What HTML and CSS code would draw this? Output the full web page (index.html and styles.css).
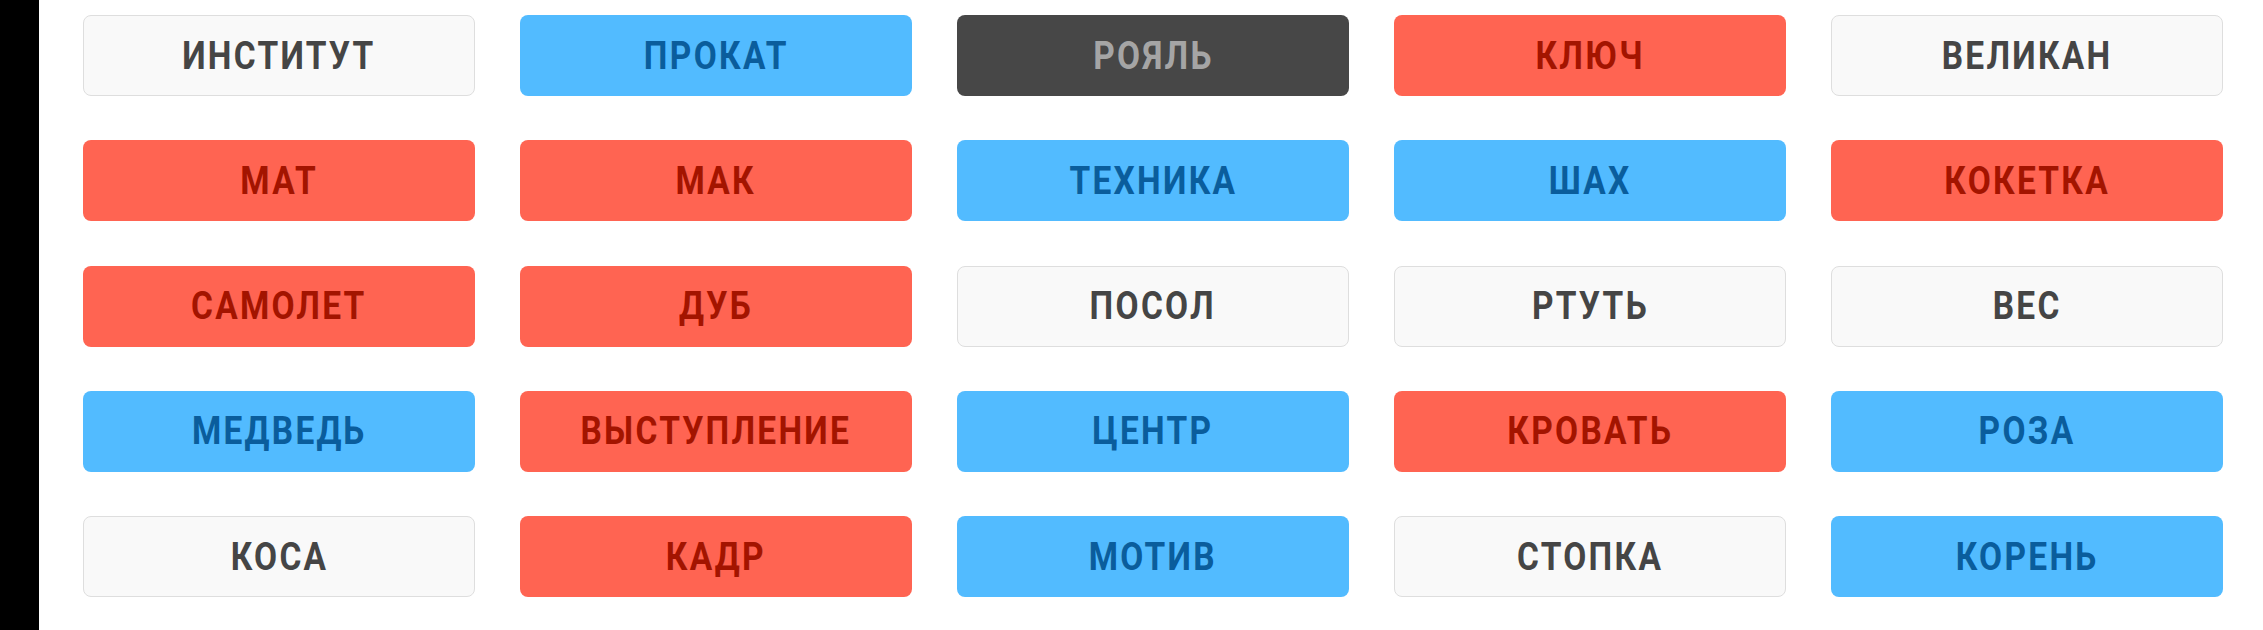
FILE: index.html
```html
<!DOCTYPE html>
<html lang="ru">
<head>
  <meta charset="UTF-8" />
  <title>Кодовые имена</title>
  <link rel="stylesheet" href="styles.css">
</head>
<body>
  <div class="board">
    <div class="grid" id="grid"></div>
  </div>

  <script>
    const words = [
      ["ИНСТИТУТ", "neutral"], ["ПРОКАТ", "blue"], ["РОЯЛЬ", "killer"], ["КЛЮЧ", "red"], ["ВЕЛИКАН", "neutral"],
      ["МАТ", "red"], ["МАК", "red"], ["ТЕХНИКА", "blue"], ["ШАХ", "blue"], ["КОКЕТКА", "red"],
      ["САМОЛЕТ", "red"], ["ДУБ", "red"], ["ПОСОЛ", "neutral"], ["РТУТЬ", "neutral"], ["ВЕС", "neutral"],
      ["МЕДВЕДЬ", "blue"], ["ВЫСТУПЛЕНИЕ", "red"], ["ЦЕНТР", "blue"], ["КРОВАТЬ", "red"], ["РОЗА", "blue"],
      ["КОСА", "neutral"], ["КАДР", "red"], ["МОТИВ", "blue"], ["СТОПКА", "neutral"], ["КОРЕНЬ", "blue"]
    ];

    const grid = document.getElementById("grid");
    words.forEach(([word, team]) => {
      const card = document.createElement("div");
      card.className = "card " + team;
      card.innerHTML = `<span>${word}</span>`;
      grid.appendChild(card);
    });
  </script>
</body>
</html>
```

FILE: styles.css
```css
* { box-sizing: border-box; }
body {
  margin: 0;
  background: #000;
  font-family: Roboto, "Liberation Sans", sans-serif;
}
.board {
  margin-left: 39px;
  min-height: 100vh;
  background: #fff;
  padding: 15px 40px 33px 44px;
}
.grid {
  display: grid;
  grid-template-columns: repeat(5, 392px);
  grid-auto-rows: 81px;
  gap: 44.25px 45px;
}
.card {
  display: flex;
  align-items: center;
  justify-content: center;
  border-radius: 8px;
  border: 1px solid transparent;
  font-size: 38px;
  font-weight: 700;
  letter-spacing: 2.6px;
}
.card span {
  display: inline-block;
  transform: scaleX(0.88);
}
.card.neutral { background: #f9f9f9; border-color: #dedede; color: #454545; }
.card.blue { background: #52bbff; color: #0a5d9c; }
.card.red { background: #ff6452; color: #a31400; }
.card.killer { background: #474747; color: #a5a5a5; }
```
